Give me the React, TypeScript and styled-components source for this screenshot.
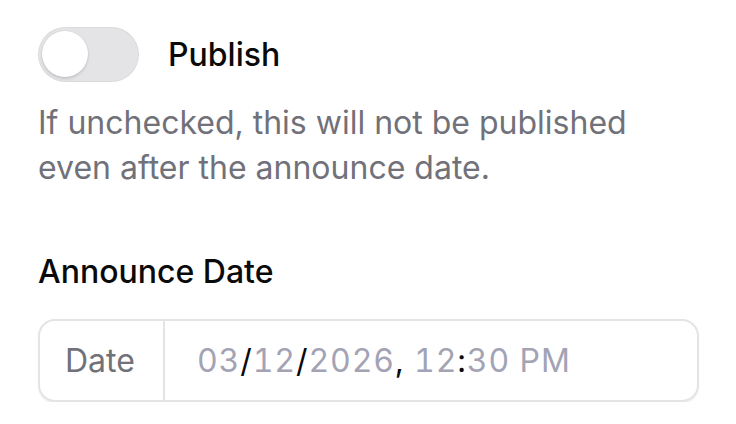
import React, { useState } from 'react'
import styled, { createGlobalStyle } from 'styled-components'

const GlobalStyle = createGlobalStyle`
  html, body {
    margin: 0;
    padding: 0;
    background: #ffffff;
  }
  body {
    font-family: Inter, "Noto Sans", sans-serif;
    color: #0a0a0a;
  }
`

const Page = styled.main`
  display: flex;
  flex-direction: column;
  padding: 27px 37px 0 38px;
  width: 661px;
`

const ToggleRow = styled.label`
  display: flex;
  align-items: center;
  gap: 29px;
  cursor: pointer;
`

const Track = styled.span<{ $on: boolean }>`
  position: relative;
  display: inline-flex;
  align-items: center;
  width: 101px;
  height: 55px;
  border-radius: 28px;
  background: ${(p) => (p.$on ? '#18181b' : '#e4e4e7')};
  box-shadow: inset 0 0 0 1px rgba(0, 0, 0, 0.04);
  transition: background 0.2s;
`

const Knob = styled.span<{ $on: boolean }>`
  position: absolute;
  top: 4px;
  left: ${(p) => (p.$on ? '51px' : '4px')};
  width: 46px;
  height: 46px;
  border-radius: 50%;
  background: #ffffff;
  box-shadow: 0 2px 3px rgba(0, 0, 0, 0.12), 0 0 0 1px rgba(0, 0, 0, 0.03);
  transition: left 0.2s;
`

const HiddenInput = styled.input`
  position: absolute;
  opacity: 0;
  pointer-events: none;
`

const ToggleLabel = styled.span`
  font-size: 32px;
  font-weight: 500;
  line-height: 40px;
  color: #0a0a0a;
`

const Hint = styled.p`
  margin: 18px 0 0;
  font-size: 32px;
  line-height: 45px;
  color: #71717a;
`

const FieldTitle = styled.h2`
  margin: 62px 0 0;
  font-size: 32px;
  font-weight: 500;
  line-height: 40px;
  color: #0a0a0a;
`

const InputBox = styled.div`
  display: flex;
  align-items: stretch;
  margin-top: 27px;
  height: 83px;
  box-sizing: border-box;
  border: 2px solid #e4e4e7;
  border-radius: 17px;
  box-shadow: 0 2px 1px rgba(0, 0, 0, 0.05);
  background: #ffffff;
  overflow: hidden;
`

const Addon = styled.span`
  display: flex;
  align-items: center;
  padding: 0 28px 0 25px;
  border-right: 2px solid #e4e4e7;
  font-size: 32px;
  color: #71717a;
`

const Value = styled.div`
  display: flex;
  align-items: center;
  padding-left: 32px;
  font-size: 32px;
  font-variant-numeric: tabular-nums;
  letter-spacing: 0.9px;
`

const Segment = styled.span`
  color: #a3a3b5;
`

const Sep = styled.span`
  color: #0a0a0a;
`

export default function App() {
  const [on, setOn] = useState(false)
  return (
    <>
      <GlobalStyle />
      <Page>
        <ToggleRow>
          <HiddenInput type="checkbox" checked={on} onChange={() => setOn(!on)} />
          <Track $on={on}>
            <Knob $on={on} />
          </Track>
          <ToggleLabel>Publish</ToggleLabel>
        </ToggleRow>
        <Hint>
          If unchecked, this will not be published
          <br />
          even after the announce date.
        </Hint>
        <FieldTitle>Announce Date</FieldTitle>
        <InputBox>
          <Addon>Date</Addon>
          <Value>
            <Segment>03</Segment>
            <Sep>/</Sep>
            <Segment>12</Segment>
            <Sep>/</Sep>
            <Segment>2026</Segment>
            <Sep>,&nbsp;</Sep>
            <Segment>12</Segment>
            <Sep>:</Sep>
            <Segment>30 PM</Segment>
          </Value>
        </InputBox>
      </Page>
    </>
  )
}
